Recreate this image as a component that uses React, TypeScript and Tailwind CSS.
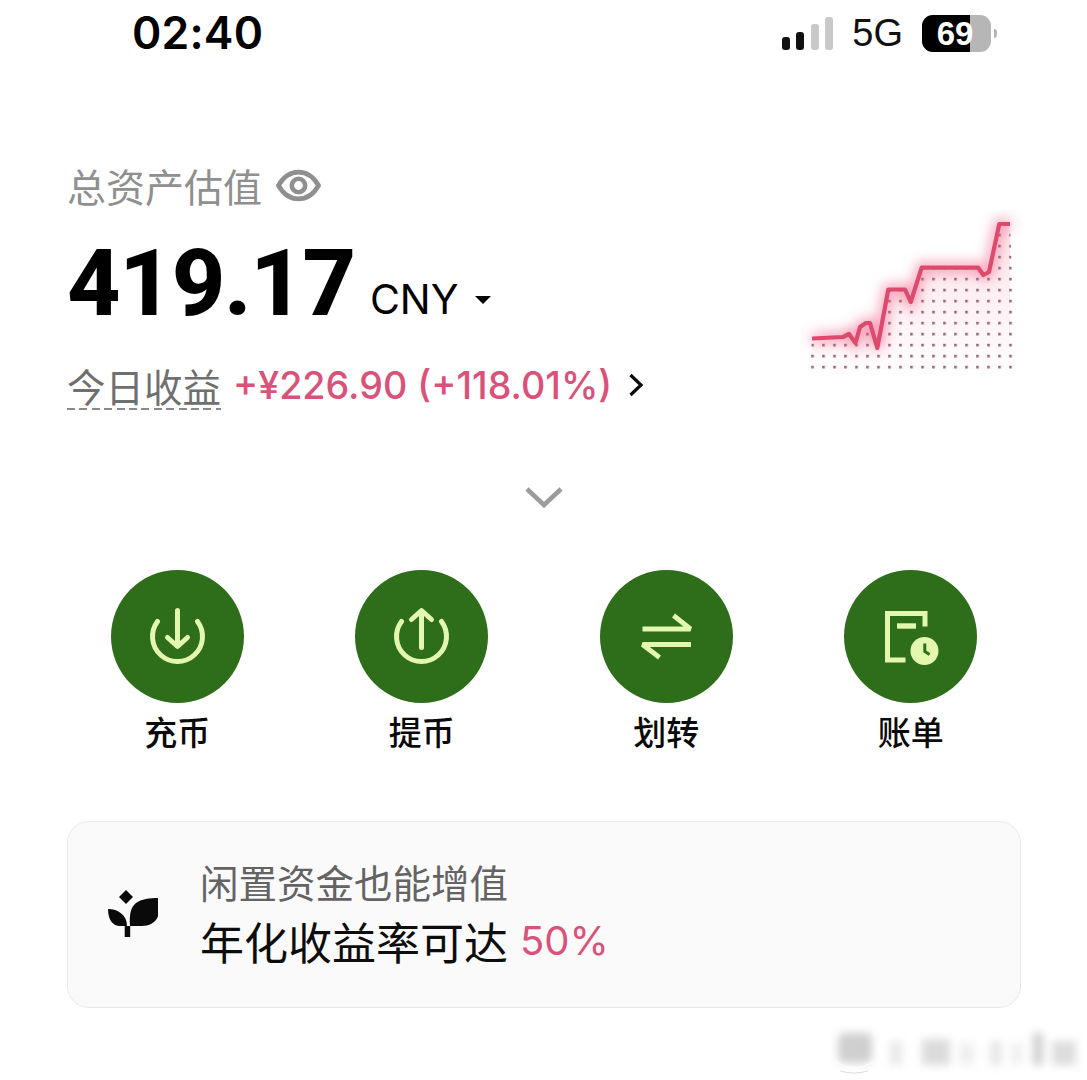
import React from "react";

const pts = "812,338.5 843,337 849,334 855.5,343 860,327 866,323 870,323 877.3,348 888.3,289.5 905,289.5 910.7,302 921.7,267.7 978.3,267.7 983.3,275 989,272 999.3,224 1010,224";
const OX = 800;
const OY = 210;
const localPts = pts.split(" ").map((p) => {
  const [x, y] = p.split(",").map(Number);
  return `${(x - OX).toFixed(1)},${(y - OY).toFixed(1)}`;
}).join(" ");

function Chart() {
  return (
    <svg width="230" height="170" viewBox="0 0 230 170" className="block">
      <defs>
        <filter id="glow" x="-20%" y="-30%" width="140%" height="160%">
          <feGaussianBlur stdDeviation="6.5" />
        </filter>
        <pattern id="dots" x="11.2" y="1.8" width="11" height="11" patternUnits="userSpaceOnUse">
          <rect x="0" y="0" width="2.6" height="2.6" fill="#8f6478" />
        </pattern>
        <linearGradient id="fade" x1="0" y1="0" x2="0" y2="1">
          <stop offset="0" stopColor="#f06a8c" stopOpacity="0.18" />
          <stop offset="1" stopColor="#f06a8c" stopOpacity="0.02" />
        </linearGradient>
        <clipPath id="under">
          <polygon points={`${localPts} 216,162 9,162`} />
        </clipPath>
      </defs>
      <polygon points={`${localPts} 210,160 12,160`} fill="url(#fade)" />
      <rect x="9" y="12" width="207" height="150" fill="url(#dots)" clipPath="url(#under)" />
      <polyline points={localPts} fill="none" stroke="#f2557f" strokeWidth="9" strokeOpacity="0.65" filter="url(#glow)" />
      <polyline points={localPts} fill="none" stroke="#dc4a6e" strokeWidth="4.2" strokeLinejoin="round" />
    </svg>
  );
}

function Eye() {
  return (
    <svg width="45" height="33" viewBox="0 0 47 34" fill="none" stroke="#8f8f8f" strokeWidth="4.8">
      <path d="M2.5 17C8 7.5 15 3 23.5 3S39 7.5 44.5 17C39 26.5 32 31 23.5 31S8 26.5 2.5 17Z" strokeLinejoin="round" />
      <circle cx="23.5" cy="17" r="7" />
    </svg>
  );
}

const LIME = "#e3f7ae";

function ActionIcon({ kind }: { kind: string }) {
  return (
    <svg width="133" height="133" viewBox="-66.5 -66.5 133 133" fill="none" stroke={LIME} strokeWidth="5">
      {kind === "in" && (
        <g strokeLinecap="round" strokeLinejoin="round">
          <path d="M-20 -15A25 25 0 1 0 20 -15" />
          <path d="M0 -26V9" />
          <path d="M-10 1L0 10L10 1" />
        </g>
      )}
      {kind === "out" && (
        <g strokeLinecap="round" strokeLinejoin="round">
          <path d="M-20 -15A25 25 0 1 0 20 -15" />
          <path d="M0 -24V11" />
          <path d="M-10 -17L0 -26L10 -17" />
        </g>
      )}
      {kind === "swap" && (
        <g strokeWidth="4.8" strokeLinecap="butt" strokeLinejoin="bevel">
          <path d="M-24 -7.5H24L7 -21" />
          <path d="M24.5 8H-24L-7 21" />
        </g>
      )}
      {kind === "bill" && (
        <g>
          <path d="M14.5 -10V-23H-23V23.5H-5" strokeWidth="5" />
          <path d="M-13.5 -10.5H5.5" strokeWidth="5.4" />
          <circle cx="14" cy="14.5" r="14" fill={LIME} stroke="none" />
          <path d="M14.3 7V15L19 18" stroke="#2e6d1a" strokeWidth="3" />
        </g>
      )}
    </svg>
  );
}

function Leaf() {
  return (
    <svg width="52" height="50" viewBox="0 0 52 50" fill="#0a0a0a">
      <path d="M18 0L25 7L18 14L11 7Z" />
      <path d="M50 8V26C48 33 40 36 34 36H22C21 24 23 17 28 13C33 9 42 8 50 8Z" />
      <path d="M0 19C10 19 19 25 19 36H12C5 36 0 30 0 19Z" />
      <rect x="16.7" y="36" width="5.5" height="11" />
    </svg>
  );
}

const actions = [
  { kind: "in", label: "充币" },
  { kind: "out", label: "提币" },
  { kind: "swap", label: "划转" },
  { kind: "bill", label: "账单" },
];

const cjk = "font-['Noto_Sans_CJK_SC',sans-serif]";
const latin = "font-['Inter','Noto_Sans_CJK_SC',sans-serif]";

export default function App() {
  return (
    <div className={`relative w-[1087px] h-[1080px] overflow-hidden bg-white text-black ${cjk}`}>
      {/* Status bar */}
      <div className="h-[66px] flex items-center justify-between pl-[132px] pr-[90px]">
        <span className={`${latin} text-[44.5px] leading-[66px] font-semibold tracking-[0.2px]`}>02:40</span>
        <div className="flex items-center">
          <div className="flex items-end gap-[6.5px] h-[33px] mt-[1px]">
            <div className="w-[8px] h-[13px] rounded-[3px] bg-[#111111]" />
            <div className="w-[8px] h-[18px] rounded-[3px] bg-[#111111]" />
            <div className="w-[8px] h-[26px] rounded-[3px] bg-[#c9c9c9]" />
            <div className="w-[8px] h-[33px] rounded-[3px] bg-[#c9c9c9]" />
          </div>
          <span className="ml-[19px] font-['Liberation_Sans',sans-serif] text-[38px] leading-[44px] text-[#111111]">5G</span>
          <div className="ml-[19px] relative w-[69px] h-[37px] rounded-[11px] overflow-hidden flex bg-[#b6b6b6]">
            <div className="w-[48px] h-full bg-black" />
            <span className="absolute inset-0 flex items-center justify-center pr-[3px] font-['Liberation_Sans',sans-serif] font-bold text-[33px] leading-[37px] text-white">69</span>
          </div>
          <div className="ml-[3px] w-[3px] h-[9px] rounded-r-[3px] bg-[#b6b6b6]" />
        </div>
      </div>

      {/* Asset summary */}
      <div className="relative pl-[67px] pt-[96px]">
        <div className="flex items-center gap-[14px] h-[46px]">
          <span className="text-[39px] leading-[46px] text-[#8f8f8f]">总资产估值</span>
          <Eye />
        </div>
        <div className="mt-[26px] h-[100px] flex items-center">
          <span className="font-['Roboto',sans-serif] text-[93px] leading-[100px] font-extrabold tabular-nums tracking-[-1.3px]">419.17</span>
          <span className={`${latin} ml-[15px] mt-[30px] text-[41px] leading-[50px]`}>CNY</span>
          <div className="ml-[16px] mt-[32px] w-0 h-0 border-l-[8.5px] border-r-[8.5px] border-t-[8.5px] border-l-transparent border-r-transparent border-t-black" />
        </div>
        <div className="mt-[28px] h-[46px] flex items-center">
          <span className="relative text-[38.5px] leading-[46px] text-[#6f6f6f]">
            今日收益
            <span className="absolute left-0 right-0 -bottom-[2px] h-[2.5px] bg-[repeating-linear-gradient(90deg,#8a8a8a_0,#8a8a8a_8px,transparent_8px,transparent_12.4px)]" />
          </span>
          <span className={`${latin} ml-[12px] text-[37.7px] leading-[46px] font-medium text-[#d9527a]`}>+¥226.90 (+118.01%)</span>
          <svg className="ml-[16px]" width="16" height="24" viewBox="0 0 16 24" fill="none" stroke="#0a0a0a" strokeWidth="3.2">
            <path d="M2.5 2L13 12L2.5 22" />
          </svg>
        </div>
        <div className="absolute left-[800px] top-[144px]">
          <Chart />
        </div>
      </div>

      {/* Chevron */}
      <div className="mt-[79px] h-[21px] flex justify-center">
        <svg width="38" height="21" viewBox="0 0 38 21" fill="none" stroke="#9c9c9c" strokeWidth="4.6">
          <path d="M2 2L19 18L36 2" />
        </svg>
      </div>

      {/* Actions */}
      <div className="mt-[62px] pl-[55px] pr-[54px] grid grid-cols-4">
        {actions.map((a) => (
          <div key={a.kind} className="flex flex-col items-center">
            <div className="w-[133px] h-[133px] rounded-full bg-[#2e6d1a] flex items-center justify-center">
              <ActionIcon kind={a.kind} />
            </div>
            <span className="mt-[8px] text-[33px] leading-[40px] font-medium text-[#0a0a0a]">{a.label}</span>
          </div>
        ))}
      </div>

      {/* Promo card */}
      <div className="mt-[70px] ml-[67px] mr-[66px] h-[187px] rounded-[22px] border border-[#e9e9e9] bg-[#fafafa] flex items-center pl-[40px]">
        <Leaf />
        <div className="ml-[40px] pb-[6px] flex flex-col">
          <span className="text-[38.5px] leading-[46px] text-[#636363]">闲置资金也能增值</span>
          <span className="mt-[12px] h-[50px] flex items-center text-[44px] leading-[50px] text-[#0d0d0d] whitespace-nowrap">
            年化收益率可达<span className={`${latin} ml-[12px] text-[40px] text-[#d9527a]`}>50%</span>
          </span>
        </div>
      </div>

      {/* Blurred watermark */}
      <svg className="absolute left-[830px] top-[1025px]" width="257" height="55" viewBox="0 0 257 55" fill="#cfcfcf">
        <defs>
          <filter id="wm" x="-40%" y="-40%" width="180%" height="180%">
            <feGaussianBlur stdDeviation="4" />
          </filter>
        </defs>
        <g filter="url(#wm)">
          <rect x="8" y="8" width="34" height="30" rx="6" />
          <rect x="60" y="16" width="12" height="24" opacity="0.45" />
          <rect x="92" y="14" width="28" height="26" opacity="0.75" />
          <rect x="130" y="18" width="14" height="22" opacity="0.35" />
          <rect x="160" y="16" width="12" height="24" opacity="0.5" />
          <rect x="182" y="18" width="10" height="22" opacity="0.35" />
          <rect x="203" y="8" width="10" height="32" />
          <rect x="222" y="16" width="24" height="24" opacity="0.7" />
        </g>
        <path d="M5 36Q24 50 44 36" fill="none" stroke="#ffffff" strokeWidth="1" />
        <path d="M10 46Q24 50 38 46" fill="none" stroke="#dddddd" strokeWidth="1" />
      </svg>
    </div>
  );
}
